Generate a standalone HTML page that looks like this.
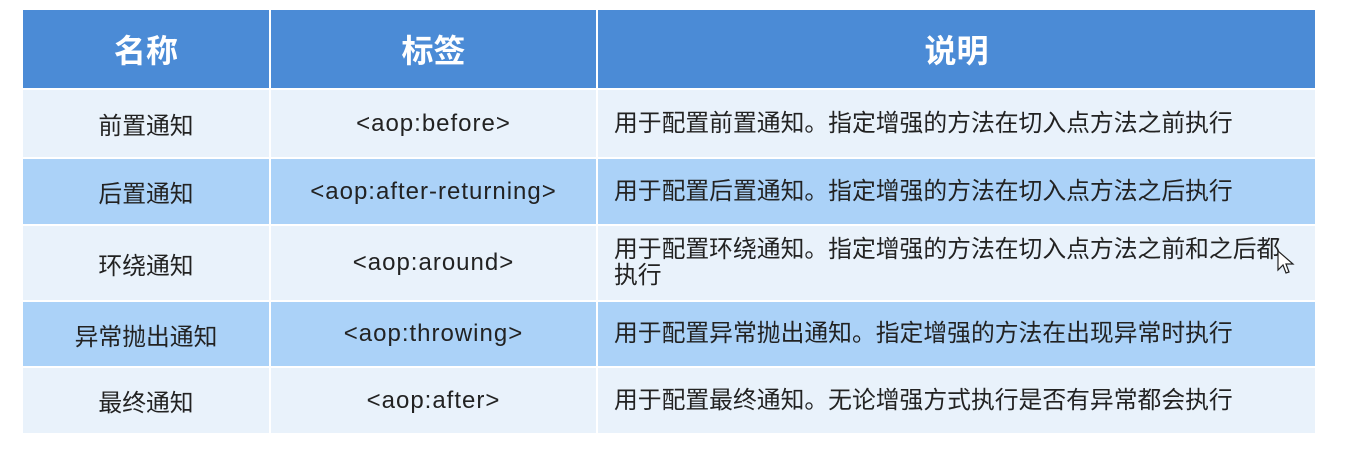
<!DOCTYPE html>
<html><head><meta charset="utf-8"><style>
body{margin:0;width:1345px;height:450px;background:#fff;overflow:hidden;font-family:"Liberation Sans","Noto Sans CJK SC",sans-serif;}
.c{position:absolute;display:flex;align-items:center;box-sizing:border-box;color:#222;font-size:23.8px;}
.h{background:#4b8bd6;color:#fff;font-weight:bold;font-size:32px;justify-content:center;}
.l{background:#e9f2fb;}
.b{background:#abd2f8;}
.m{justify-content:center;}
.t{letter-spacing:1px;font-size:24px;}
.d{padding-left:16px;padding-right:20px;line-height:26px;}
</style></head><body>
<div class="c h" style="left:23px;top:10px;width:246px;height:78px">名称</div>
<div class="c h" style="left:271px;top:10px;width:325px;height:78px">标签</div>
<div class="c h" style="left:598px;top:10px;width:717px;height:78px">说明</div>

<div class="c l m" style="left:23px;top:90px;width:246px;height:67px">前置通知</div>
<div class="c l m t" style="left:271px;top:90px;width:325px;height:67px">&lt;aop:before&gt;</div>
<div class="c l d" style="left:598px;top:90px;width:717px;height:67px">用于配置前置通知。指定增强的方法在切入点方法之前执行</div>

<div class="c b m" style="left:23px;top:159px;width:246px;height:65px">后置通知</div>
<div class="c b m t" style="left:271px;top:159px;width:325px;height:65px">&lt;aop:after-returning&gt;</div>
<div class="c b d" style="left:598px;top:159px;width:717px;height:65px">用于配置后置通知。指定增强的方法在切入点方法之后执行</div>

<div class="c l m" style="left:23px;top:226px;width:246px;height:74px">环绕通知</div>
<div class="c l m t" style="left:271px;top:226px;width:325px;height:74px">&lt;aop:around&gt;</div>
<div class="c l d" style="left:598px;top:226px;width:717px;height:74px">用于配置环绕通知。指定增强的方法在切入点方法之前和之后都执行</div>

<div class="c b m" style="left:23px;top:302px;width:246px;height:64px">异常抛出通知</div>
<div class="c b m t" style="left:271px;top:302px;width:325px;height:64px">&lt;aop:throwing&gt;</div>
<div class="c b d" style="left:598px;top:302px;width:717px;height:64px">用于配置异常抛出通知。指定增强的方法在出现异常时执行</div>

<div class="c l m" style="left:23px;top:368px;width:246px;height:65px">最终通知</div>
<div class="c l m t" style="left:271px;top:368px;width:325px;height:65px">&lt;aop:after&gt;</div>
<div class="c l d" style="left:598px;top:368px;width:717px;height:65px">用于配置最终通知。无论增强方式执行是否有异常都会执行</div>

<svg style="position:absolute;left:1277px;top:250px" width="20" height="28" viewBox="0 0 20 28"><path d="M1 1 L1 20 L6 15 L9 23 L12 22 L9 14 L16 14 Z" fill="#fff" stroke="#222" stroke-width="1.2"/></svg>
</body></html>
